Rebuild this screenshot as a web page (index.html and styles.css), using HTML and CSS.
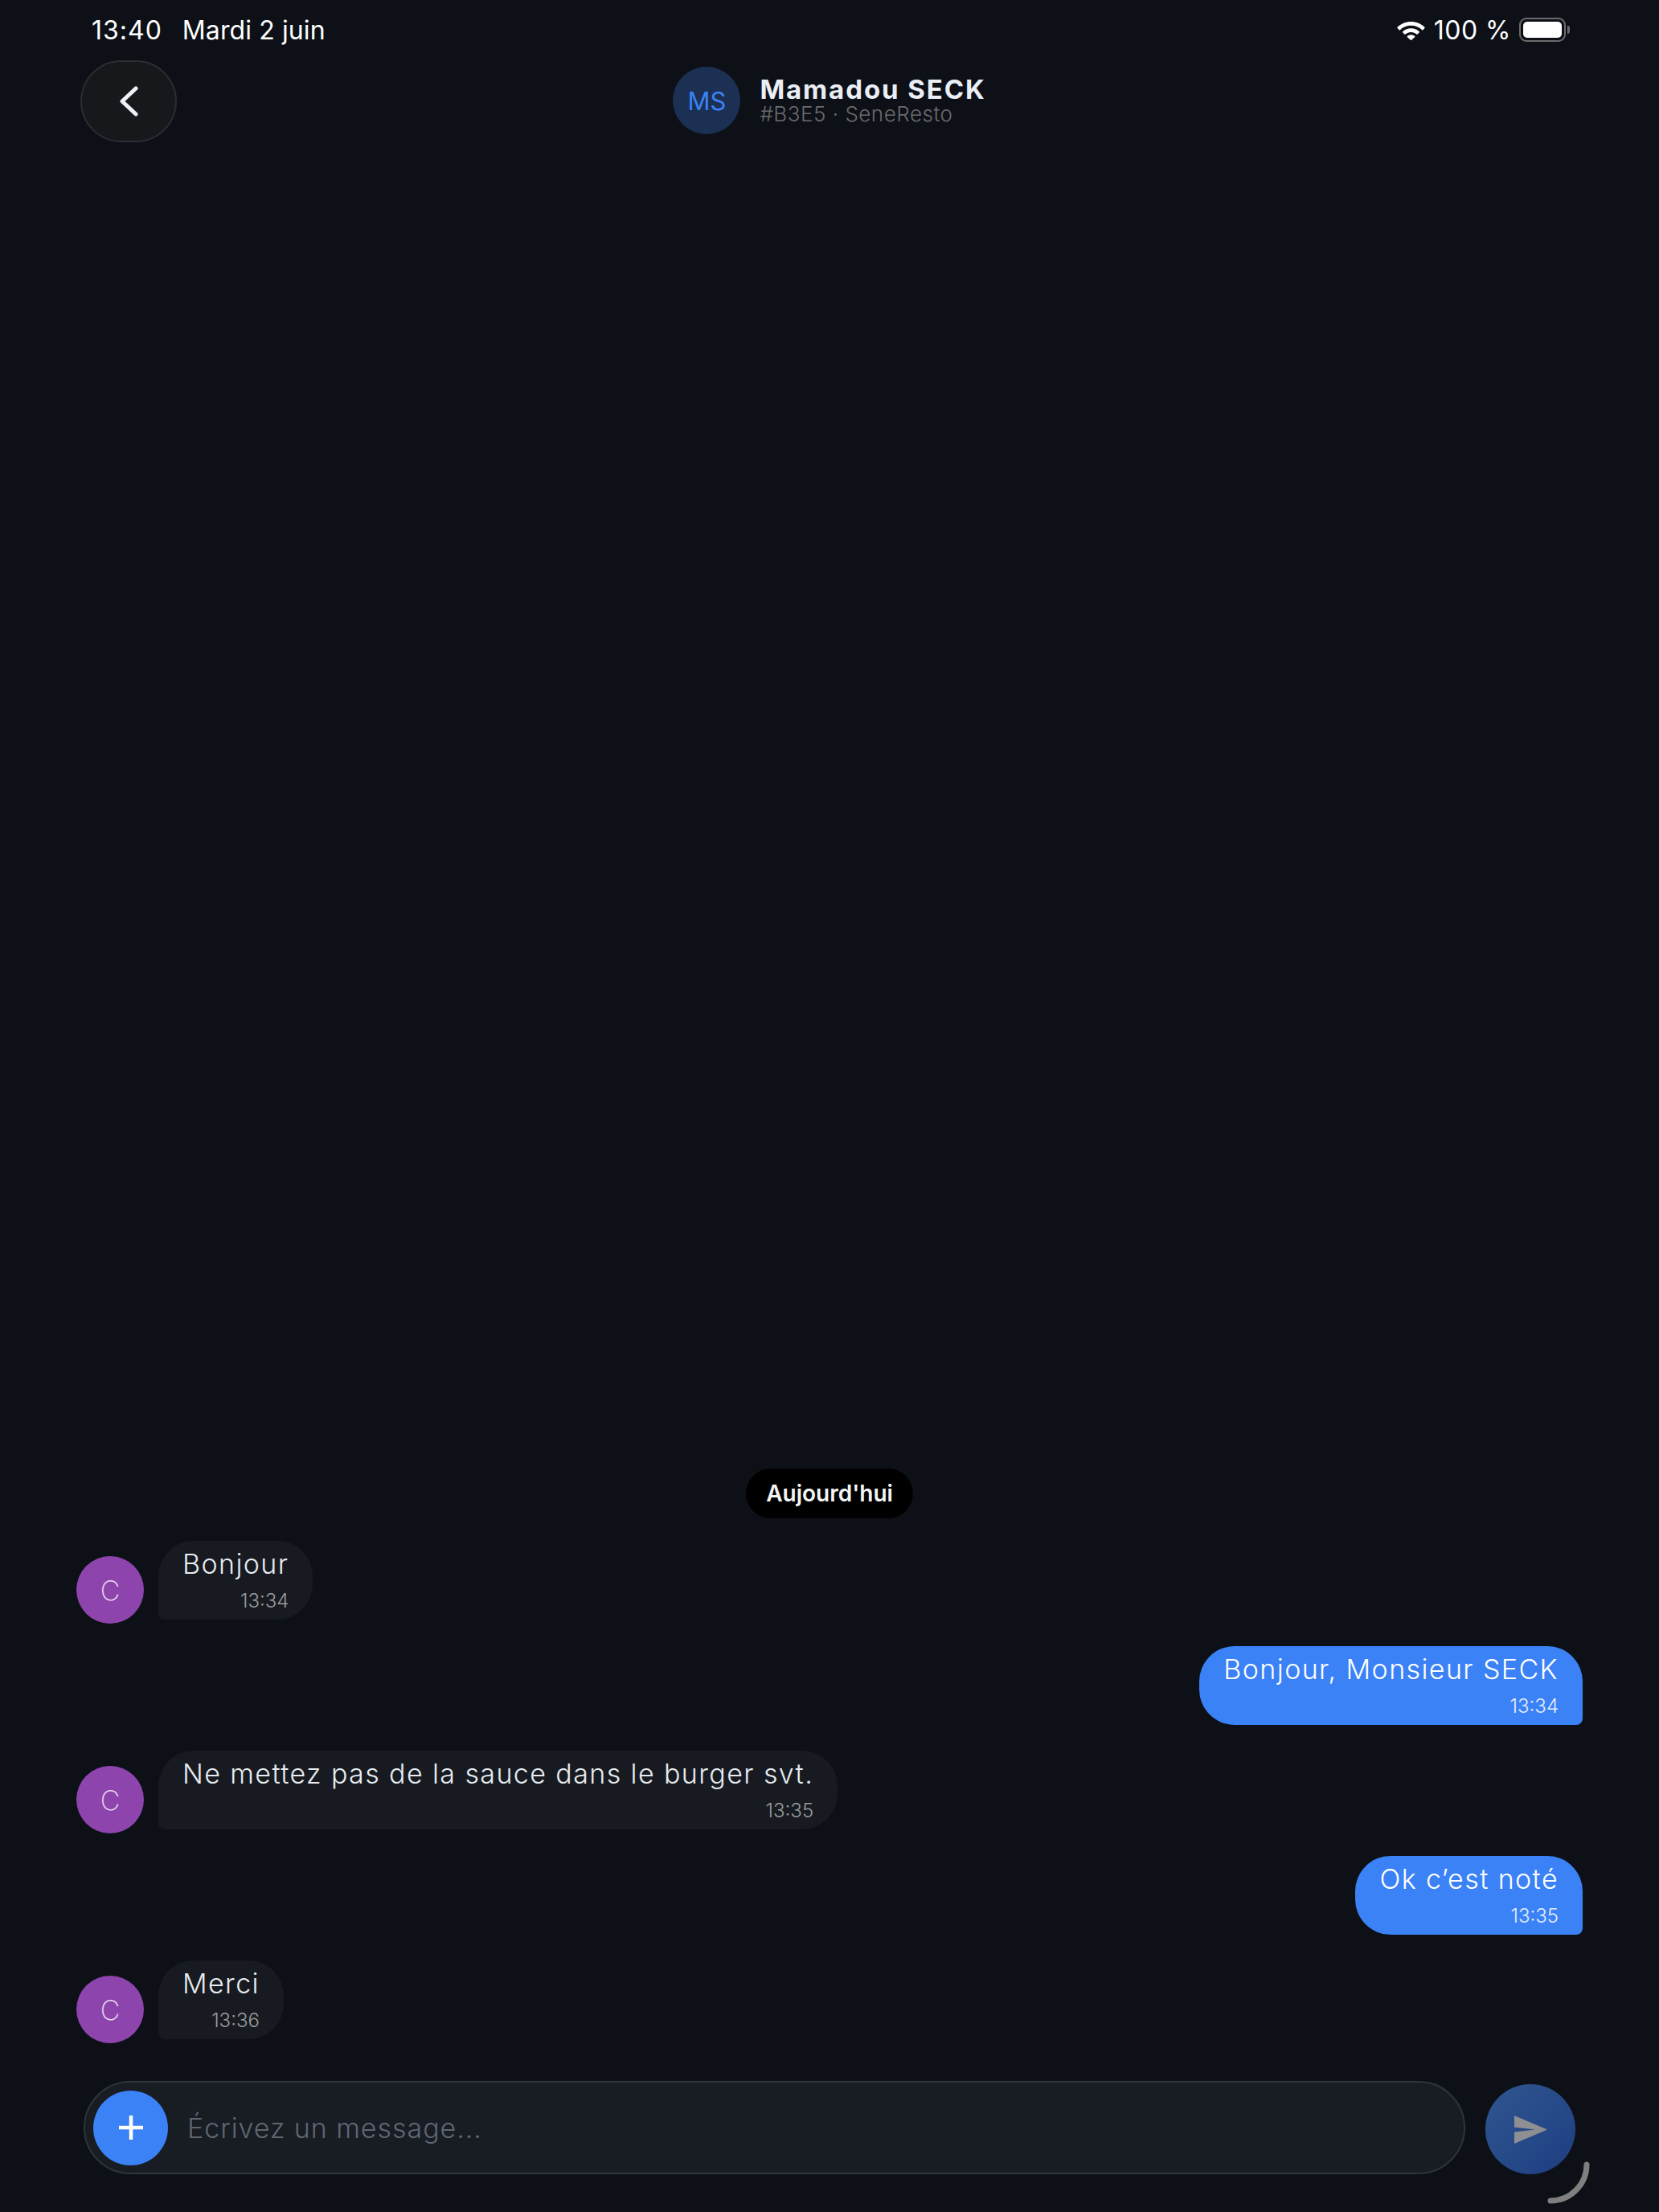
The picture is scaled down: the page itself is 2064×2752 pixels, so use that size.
FILE: index.html
```html
<!DOCTYPE html>
<html lang="fr">

<head>
    <meta charset="UTF-8">
    <meta name="viewport" content="width=device-width, initial-scale=1.0">
    <title>Mamadou SECK</title>
    <link rel="stylesheet" href="styles.css">
</head>

<body>
    <div class="status-bar">
        <div class="status-left">
            <span class="status-time">13:40</span>
            <span class="status-date">Mardi 2 juin</span>
        </div>
        <div class="status-right">
            <svg class="wifi-icon" viewBox="0 0 35 23">
                <path d="M17.5 0C11 0 5 2.6.6 6.8c-.4.4-.4.9 0 1.3l2 2.1c.4.4.9.4 1.3 0C7.500 6.800 12.300 4.800 17.500 4.800s10 2 13.600 5.400c.4.4.9.4 1.300 0l2-2.100c.4-.4.4-.9 0-1.300C30 2.600 24 0 17.500 0z" />
                <path d="M17.500 8.200c-3.900 0-7.500 1.500-10.200 4-.4.4-.4.9 0 1.300l2.100 2.100c.4.4.9.4 1.300 0 1.800-1.600 4.200-2.600 6.800-2.600s5 1 6.800 2.600c.4.4.9.4 1.300 0l2.100-2.100c.4-.4.4-.9 0-1.300-2.700-2.500-6.300-4-10.200-4z" />
                <path d="M17.500 16.300c-1.800 0-3.400.7-4.600 1.700-.4.400-.4.900 0 1.300l4 3.500c.4.300.9.300 1.200 0l4-3.500c.4-.4.4-.9 0-1.300-1.200-1-2.800-1.700-4.600-1.700z" />
            </svg>
            <span class="status-battery-text">100 %</span>
            <div class="battery">
                <div class="battery-body"><div class="battery-fill"></div></div>
                <div class="battery-nub"></div>
            </div>
        </div>
    </div>

    <header class="chat-header">
        <button class="back-btn" type="button" aria-label="Retour">
            <svg viewBox="0 0 24 38" class="back-icon">
                <path d="M21 3 4 19l17 16" />
            </svg>
        </button>
        <div class="chat-title">
            <div class="title-avatar">MS</div>
            <div class="title-text">
                <div class="title-name">Mamadou SECK</div>
                <div class="title-sub">#B3E5 · SeneResto</div>
            </div>
        </div>
    </header>

    <main class="messages">
        <div class="date-pill">Aujourd'hui</div>

        <div class="row">
            <div class="avatar">C</div>
            <div class="bubble in">
                <div class="msg-text">Bonjour</div>
                <div class="msg-time">13:34</div>
            </div>
        </div>

        <div class="row mine">
            <div class="bubble out">
                <div class="msg-text">Bonjour, Monsieur SECK</div>
                <div class="msg-time">13:34</div>
            </div>
        </div>

        <div class="row">
            <div class="avatar">C</div>
            <div class="bubble in">
                <div class="msg-text">Ne mettez pas de la sauce dans le burger svt.</div>
                <div class="msg-time">13:35</div>
            </div>
        </div>

        <div class="row mine">
            <div class="bubble out">
                <div class="msg-text">Ok c’est noté</div>
                <div class="msg-time">13:35</div>
            </div>
        </div>

        <div class="row">
            <div class="avatar">C</div>
            <div class="bubble in">
                <div class="msg-text">Merci</div>
                <div class="msg-time">13:36</div>
            </div>
        </div>
    </main>

    <footer class="composer">
        <div class="input-box">
            <button class="add-btn" type="button" aria-label="Ajouter">
                <svg viewBox="0 0 30 30" class="add-icon">
                    <path d="M15 0v30M0 15h30" />
                </svg>
            </button>
            <span class="placeholder">Écrivez un message...</span>
        </div>
        <button class="send-btn" type="button" aria-label="Envoyer">
            <svg viewBox="0 0 41 35" class="send-icon">
                <path d="M0 0 41 17.500 0 35V20.500L26 17.500 0 14.500z" />
            </svg>
        </button>
    </footer>

    <svg class="corner-arc" viewBox="0 0 60 60">
        <path d="M49 4A45 45 0 0 1 4 49" />
    </svg>
</body>

</html>
```

FILE: styles.css
```css
:root {
    --bg-color: #0d1117;
    --bubble-color: #171b21;
    --blue-color: #3b82f6;
    --text-color: #e8ebf0;
}

html,
body {
    margin: 0;
    height: 2752px;
}

body {
    position: relative;
    overflow: hidden;
    display: flex;
    flex-direction: column;
    background-color: var(--bg-color);
    color: var(--text-color);
    font-family: 'Inter', sans-serif;
}

button {
    border: none;
    padding: 0;
    cursor: pointer;
}

.status-bar {
    height: 75px;
    padding: 0 111px 0 114px;
    display: flex;
    justify-content: space-between;
    color: #fff;
    font-size: 32px;
    letter-spacing: 0.5px;
}

.status-left {
    display: flex;
    gap: 25px;
    padding-top: 19px;
    line-height: 38px;
}

.status-time {
    letter-spacing: 1px;
}

.status-date {
    letter-spacing: 0.1px;
}

.status-right {
    display: flex;
    align-items: flex-start;
    line-height: 38px;
    padding-top: 19px;
}

.wifi-icon {
    width: 35px;
    height: 23px;
    margin: 8px 11px 0 0;
    fill: #fff;
}

.battery {
    display: flex;
    align-items: center;
    margin: 3px 0 0 10px;
}

.battery-body {
    width: 58px;
    height: 30px;
    box-sizing: border-box;
    padding: 3px;
    border: 2px solid #6b6b6b;
    border-radius: 9px;
}

.battery-fill {
    height: 100%;
    background-color: #fff;
    border-radius: 5px;
}

.battery-nub {
    width: 3px;
    height: 10px;
    margin-left: 2px;
    background-color: #6b6b6b;
    border-radius: 0 3px 3px 0;
}

.chat-header {
    display: grid;
    grid-template-columns: 1fr auto 1fr;
    align-items: start;
    padding-left: 100px;
    padding-right: 100px;
}

.back-btn {
    width: 120px;
    height: 102px;
    box-sizing: border-box;
    display: flex;
    align-items: center;
    justify-content: center;
    background-color: #16191c;
    border: 2px solid #2a2e33;
    border-radius: 51px;
}

.back-icon {
    width: 24px;
    height: 38px;
    fill: none;
    stroke: #eef1f5;
    stroke-width: 5;
    stroke-linecap: round;
    stroke-linejoin: round;
}

.chat-title {
    display: flex;
    align-items: center;
    gap: 24px;
    margin-top: 8px;
}

.title-avatar {
    width: 84px;
    height: 84px;
    display: flex;
    align-items: center;
    justify-content: center;
    border-radius: 50%;
    background-color: #1b3052;
    color: var(--blue-color);
    font-size: 31px;
}

.title-text {
    margin-bottom: 2px;
}

.title-name {
    font-size: 33px;
    font-weight: 700;
    letter-spacing: 1.9px;
    line-height: 36px;
    color: #eaeef5;
}

.title-sub {
    font-size: 26px;
    font-weight: 300;
    letter-spacing: 0.5px;
    line-height: 26px;
    color: #6a6b6e;
}

.messages {
    flex: 1;
    display: flex;
    flex-direction: column;
    justify-content: flex-end;
    padding: 0 95px 52px;
    gap: 32.5px;
}

.date-pill {
    align-self: center;
    padding: 0 25px;
    line-height: 62px;
    margin-bottom: -4.5px;
    background-color: #000;
    border-radius: 31px;
    color: #f4f4f4;
    font-size: 28px;
    font-weight: 600;
}

.row {
    display: flex;
    align-items: flex-end;
    gap: 18px;
}

.row.mine {
    justify-content: flex-end;
}

.avatar {
    width: 84px;
    height: 84px;
    margin-bottom: -5px;
    display: flex;
    align-items: center;
    justify-content: center;
    border-radius: 50%;
    background-color: #8e44ad;
    color: #e6d6ee;
    font-size: 34px;
    font-weight: 200;
}

.bubble {
    height: 98px;
    box-sizing: border-box;
    padding: 6px 30px 0;
    border-radius: 44px;
    text-align: right;
}

.bubble.in {
    background-color: var(--bubble-color);
    border-bottom-left-radius: 8px;
}

.bubble.out {
    background-color: var(--blue-color);
    border-bottom-right-radius: 8px;
    color: #fff;
}

.msg-text {
    font-size: 34px;
    font-weight: 300;
    letter-spacing: 1.4px;
    line-height: 46px;
    white-space: nowrap;
}

.msg-time {
    font-size: 24px;
    font-weight: 300;
    line-height: 46px;
    color: #9a9b9d;
}

.bubble.out .msg-time {
    color: #e6eefc;
}

.composer {
    display: flex;
    align-items: flex-end;
    gap: 25px;
    padding: 0 104px 47px;
}

.input-box {
    flex: 1;
    height: 116px;
    box-sizing: border-box;
    display: flex;
    align-items: center;
    gap: 24px;
    padding-left: 10px;
    background-color: #181c23;
    border: 2px solid #2f343b;
    border-radius: 58px;
}

.add-btn {
    width: 93px;
    height: 93px;
    display: flex;
    align-items: center;
    justify-content: center;
    border-radius: 50%;
    background-color: var(--blue-color);
}

.add-icon {
    width: 30px;
    height: 30px;
    fill: none;
    stroke: #fff;
    stroke-width: 4.5;
}

.placeholder {
    font-size: 34px;
    font-weight: 300;
    letter-spacing: 0.95px;
    color: #5f6673;
}

.send-btn {
    width: 112px;
    height: 112px;
    display: flex;
    align-items: center;
    justify-content: center;
    border-radius: 50%;
    background: linear-gradient(135deg, #30568f, #1d3e82);
}

.send-icon {
    width: 41px;
    height: 35px;
    fill: #8e8f93;
}

.corner-arc {
    position: absolute;
    left: 1925px;
    top: 2689px;
    width: 60px;
    height: 60px;
    fill: none;
    stroke: #7f7f7f;
    stroke-width: 7;
    stroke-linecap: round;
}
```
